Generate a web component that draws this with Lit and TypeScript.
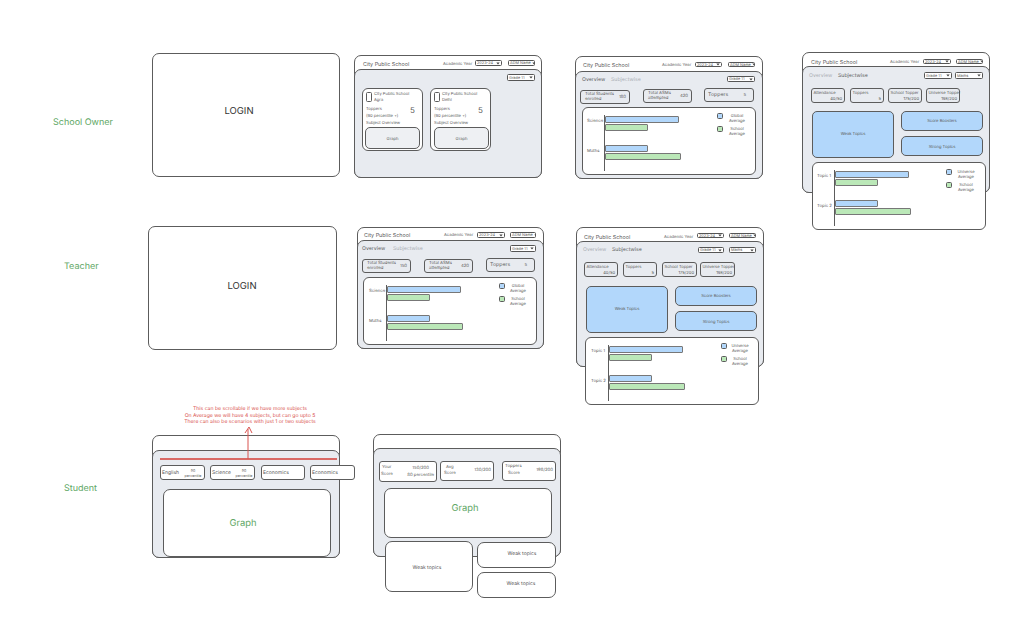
import { LitElement, html, css } from "lit";
import { customElement } from "lit/decorators.js";

type Align = "l" | "c" | "r";
const box = (x1: number, y1: number, x2: number, y2: number, cls: string, inner: unknown = "") =>
  html`<div class="box ${cls}" style="left:${x1}px;top:${y1}px;width:${x2 - x1}px;height:${y2 - y1}px">${inner}</div>`;
const t = (x: number, cy: number, text: string, cls = "s5", a: Align = "l") => {
  const left = a === "l" ? x : a === "c" ? x - 120 : x - 240;
  return html`<span class="t ${cls} a-${a}" style="left:${left}px;top:${cy - 5.2}px">${text}</span>`;
};
const sel = (x1: number, y1: number, x2: number, y2: number, label: string) =>
  box(x1, y1, x2, y2, "sel", html`<span>${label}</span><svg width="4" height="3" viewBox="0 0 5 4"><path d="M0.3 0.6H4.7L2.5 3.4Z" fill="#444"/></svg>`);

const top = (x: number, y: number, bodyY: number, x2: number, y2: number) => html`
  ${box(x, y, x2, y2, "frame")}${box(x, bodyY, x2, y2, "body")}`;

const header = (tx: number, cy: number, ax: number, s: number[], n: number[], year: string) => html`
  ${t(tx, cy, "City Public School", "s55")}
  ${t(ax, cy - 1, "Academic Year", "s41")}
  ${sel(s[0], s[1], s[2], s[3], year)}
  ${sel(n[0], n[1], n[2], n[3], "ADM Name")}`;

const stat = (x1: number, y1: number, x2: number, l1: string, l2: string, val: string, h = 14) => html`
  ${box(x1, y1, x2, y1 + h, "stat")}
  ${t(x1 + 5, y1 + 4, l1, "s43")}${t(x1 + 5, y1 + 9.5, l2, "s43")}
  ${t(x2 - 4, y1 + h / 2, val, "s43", "r")}`;

const topStat = (x1: number, y1: number, x2: number, val: string) => html`
  ${box(x1, y1, x2, y1 + 14, "stat")}
  ${t(x1 + 4, y1 + 6, "Toppers", "s52")}
  ${t(x2 - 8, y1 + 7, val, "s43", "r")}`;

const tabs = (x1: number, x2: number, cy: number, overview: boolean) => html`
  ${t(x1, cy, "Overview", overview ? "s52" : "s52 mute")}
  ${t(x2, cy, "Subjectwise", overview ? "s52 mute" : "s52")}`;

const chart = (cx: number, x: number, y: number, l1: string, l2: string, legend: string, lx1: number, ly: number, lc: number) => html`
  ${box(cx, y - 8, cx + 174, y + 60, "card")}
  ${box(x, y, x + 1, y + 56, "axis")}
  ${t(x - 17, y + 6, l1, "s43")}
  ${box(x + 1, y + 1, x + 75, y + 8, "blue bar")}
  ${box(x + 1, y + 9, x + 44, y + 16, "green bar")}
  ${t(x - 17, y + 36.5, l2, "s43")}
  ${box(x + 1, y + 30, x + 44, y + 37, "blue bar")}
  ${box(x + 1, y + 38, x + 77, y + 45, "green bar")}
  ${box(lx1, ly, lx1 + 6, ly + 6, "blue sq")}
  ${t(lc, ly + 2, legend, "s41", "c")}${t(lc, ly + 7, "Average", "s41", "c")}
  ${box(lx1, ly + 13, lx1 + 6, ly + 19, "green sq")}
  ${t(lc, ly + 15, "School", "s41", "c")}${t(lc, ly + 20, "Average", "s41", "c")}`;

const miniStat = (x1: number, y: number, x2: number, label: string, val: string) => html`
  ${box(x1, y, x2, y + 15, "stat")}
  ${t(x1 + 2.5, y + 4, label, "s41")}
  ${t(x2 - 3, y + 10, val, "s41", "r")}`;

const topics = (x1: number, y1: number, x2: number, y2: number) => html`
  ${box(x1, y1, x1 + 82, y1 + 47, "blue tile")}
  ${t(x1 + 41, y1 + 22, "Weak Topics", "s41", "c")}
  ${box(x2, y2, x2 + 82, y2 + 20, "blue tile")}
  ${t(x2 + 41, y2 + 9, "Score Boosters", "s41", "c")}
  ${box(x2, y2 + 25, x2 + 82, y2 + 45, "blue tile")}
  ${t(x2 + 41, y2 + 35, "Strong Topics", "s41", "c")}`;

const owner = (x1: number, gx1: number, city: string) => html`
  ${box(x1, 88, x1 + 61, 151, "card")}
  ${box(x1 + 4, 92, x1 + 10, 102, "check")}
  ${t(x1 + 12, 93.5, "City Public School", "s41")}${t(x1 + 12, 99, city, "s41")}
  ${t(x1 + 4, 108, "Toppers", "s41")}${t(x1 + 4, 115, "(90 percentile +)", "s41")}
  ${t(x1 + 48, 109, "5", "s75")}
  ${t(x1 + 4, 122.5, "Subject Overview", "s41")}
  ${box(gx1, 127, gx1 + 55, 149, "graphbox")}
  ${t(gx1 + 27.5, 138, "Graph", "s41", "c")}`;

const chip = (x1: number, x2: number, name: string, pct: boolean, cx = 0) => html`
  ${box(x1, 465, x2, 480, "white")}
  ${t(x1 + 2, 472, name, "s5")}
  ${pct ? html`${t(cx, 470, "90", "s37", "c")}${t(cx, 475, "percentile", "s37", "c")}` : ""}`;

@customElement("app-root")
export class AppRoot extends LitElement {
  static styles = css`
    :host { display: block; position: relative; width: 1016px; height: 622px; overflow: hidden; background: #fff; font-family: Inter, "Liberation Sans", sans-serif; font-weight: 400; color: #5a5a5a; text-rendering: geometricPrecision; }
    .box { position: absolute; box-sizing: border-box; }
    .t { position: absolute; line-height: 12px; height: 12px; white-space: nowrap; }
    .a-c { width: 240px; text-align: center; }
    .a-r { width: 240px; text-align: right; }
    .s37 { font-size: 3.6px; }
    .s41 { font-size: 4.1px; }
    .s43 { font-size: 4.3px; }
    .s5 { font-size: 5px; }
    .s52 { font-size: 5.2px; }
    .s55 { font-size: 5.4px; }
    .s75 { font-size: 8px; }
    .login { font-size: 9.5px; color: #333; }
    .role { font-size: 9px; color: #62a866; }
    .graph { font-size: 9.4px; color: #62a866; }
    .note { font-size: 5.1px; color: #d9534f; }
    .mute { color: #a9adb3; }
    .frame { background: #fff; border: 1px solid #5c5c5c; border-radius: 7px; }
    .body { background: #e8ebf0; border: 1px solid #5c5c5c; border-radius: 7px; }
    .card { background: #fff; border: 1px solid #5c5c5c; border-radius: 6px; }
    .stat { border: 1px solid #5c5c5c; border-radius: 3px; }
    .sel { display: flex; align-items: center; justify-content: space-between; gap: 1px; padding: 0 1px; border: 0.8px solid #555; border-radius: 1.5px; background: #fff; font-size: 3.9px; line-height: 1; white-space: nowrap; overflow: hidden; }
    .sel svg { flex: none; }
    .check { background: #fff; border: 1px solid #5c5c5c; border-radius: 1.5px; }
    .graphbox { background: #eef0f3; border: 1px solid #5c5c5c; border-radius: 5px; }
    .axis { background: #5c5c5c; }
    .blue { background: #b2d7fb; }
    .green { background: #bbe8b8; }
    .bar { border: 0.6px solid #777; border-radius: 1px; }
    .sq { border: 0.8px solid #5c5c5c; border-radius: 1.5px; }
    .tile { border: 1px solid #5c5c5c; border-radius: 5px; }
    .white { background: #fff; border: 1px solid #5c5c5c; border-radius: 3px; }
    .white7 { background: #fff; border: 1px solid #5c5c5c; border-radius: 7px; }
    .red { background: #d96a66; }
    svg.arrow { position: absolute; left: 240px; top: 420px; }
  `;

  render() {
    return html`
      ${t(53, 122, "School Owner", "role")}
      ${t(64, 266, "Teacher", "role")}
      ${t(64, 488, "Student", "role")}

      ${box(152, 53, 340, 177, "white7")}
      ${t(239, 111, "LOGIN", "login", "c")}
      ${box(148, 226, 337, 350, "white7")}
      ${t(242, 286, "LOGIN", "login", "c")}

      ${top(354, 55, 69, 542, 178)}
      ${header(363, 64, 443, [475, 60, 502, 66], [508, 60, 535, 66], "2023-24")}
      ${sel(507, 74, 535, 81, "Grade 11")}
      ${owner(362, 365, "Agra")}
      ${owner(430, 434, "Delhi")}

      ${top(575, 56, 71, 763, 179)}
      ${header(583, 65, 662, [695, 62, 722, 67], [728, 62, 755, 67], "2023-24")}
      ${tabs(582, 611, 79, true)}
      ${sel(727, 76, 755, 82, "Grade 11")}
      ${stat(580, 90, 630, "Total Students", "enrolled", "180")}
      ${stat(643, 89, 692, "Total ASMs", "attempted", "420")}
      ${topStat(704, 88, 754, "5")}
      ${chart(582, 604, 115, "Science", "Maths", "Global", 717, 113, 737)}

      ${top(802, 52, 66, 990, 193)}
      ${header(811, 62.5, 890, [923, 59, 951, 64], [956, 59, 983, 64], "2023-24")}
      ${tabs(809, 838, 75, false)}
      ${sel(924, 72, 952, 79, "Grade 11")}
      ${sel(955, 72, 983, 79, "Maths")}
      ${miniStat(811, 88, 845, "Attendance", "40/50")}
      ${miniStat(850, 88, 884, "Toppers", "5")}
      ${miniStat(888, 88, 922, "School Topper", "175/200")}
      ${miniStat(926, 88, 960, "Universe Topper", "198/200")}
      ${topics(812, 111, 901, 111)}
      ${chart(812, 834, 170, "Topic 1", "Topic 2", "Universe", 946, 169, 966)}

      ${top(357, 227, 240, 544, 349)}
      ${header(364, 235, 444, [477, 232, 505, 238], [510, 232, 536, 238], "2023-24")}
      ${tabs(362, 393, 248, true)}
      ${sel(510, 245, 536, 252, "Grade 11")}
      ${stat(362, 259, 411, "Total Students", "enrolled", "150")}
      ${stat(424, 259, 473, "Total ASMs", "attempted", "420")}
      ${topStat(486, 258, 535, "5")}
      ${chart(363, 386, 285, "Science", "Maths", "Global", 499, 283, 518)}

      ${top(576, 227, 241, 764, 367)}
      ${header(584, 237, 664, [697, 233, 724, 238], [729, 233, 756, 238], "2023-24")}
      ${tabs(583, 612, 249, false)}
      ${sel(698, 247, 724, 253, "Grade 11")}
      ${sel(729, 247, 756, 253, "Maths")}
      ${miniStat(584, 262, 618, "Attendance", "40/50")}
      ${miniStat(623, 262, 657, "Toppers", "5")}
      ${miniStat(662, 262, 697, "School Topper", "175/200")}
      ${miniStat(700, 262, 735, "Universe Topper", "198/200")}
      ${topics(586, 286, 675, 286)}
      ${chart(585, 608, 345, "Topic 1", "Topic 2", "Universe", 721, 343, 740)}

      ${t(250, 408, "This can be scrollable if we have more subjects", "note", "c")}
      ${t(250, 415, "On Average we will have 4 subjects, but can go upto 5", "note", "c")}
      ${t(250, 421, "There can also be scenarios with just 1 or two subjects", "note", "c")}

      ${top(152, 435, 450, 340, 558)}
      ${box(160, 458, 337, 460, "red")}
      <svg class="arrow" width="20" height="42" viewBox="0 0 20 42"><path d="M8 39V9M5 13L9 7L12 13" fill="none" stroke="#d9534f" stroke-width="1"/></svg>
      ${chip(160, 205, "English", true, 193)}
      ${chip(210, 255, "Science", true, 244)}
      ${chip(261, 305, "Economics", false)}
      ${chip(310, 355, "Economics", false)}
      ${box(163, 489, 331, 557, "white7")}
      ${t(243, 523, "Graph", "graph", "c")}

      ${top(373, 434, 448, 561, 557)}
      ${box(379, 461, 437, 482, "white")}
      ${t(382, 467, "Your", "s43")}${t(381, 474, "Score", "s43")}
      ${t(429, 468, "150/200", "s43", "r")}${t(434, 475.5, "80 percentile", "s43", "r")}
      ${box(440, 461, 494, 481, "white")}
      ${t(446, 467, "Avg", "s43")}${t(444, 473, "Score", "s43")}
      ${t(491, 470, "130/200", "s43", "r")}
      ${box(502, 461, 556, 481, "white")}
      ${t(505, 466, "Toppers", "s43")}${t(508, 473, "Score", "s43")}
      ${t(553, 470, "198/200", "s43", "r")}
      ${box(384, 488, 552, 538, "white7")}
      ${t(465, 508, "Graph", "graph", "c")}
      ${box(385, 541, 473, 592, "white7")}
      ${t(427, 567, "Weak topics", "s5", "c")}
      ${box(477, 542, 556, 568, "white7")}
      ${t(522, 553, "Weak topics", "s5", "c")}
      ${box(477, 572, 556, 598, "white7")}
      ${t(521, 583, "Weak topics", "s5", "c")}
    `;
  }
}
